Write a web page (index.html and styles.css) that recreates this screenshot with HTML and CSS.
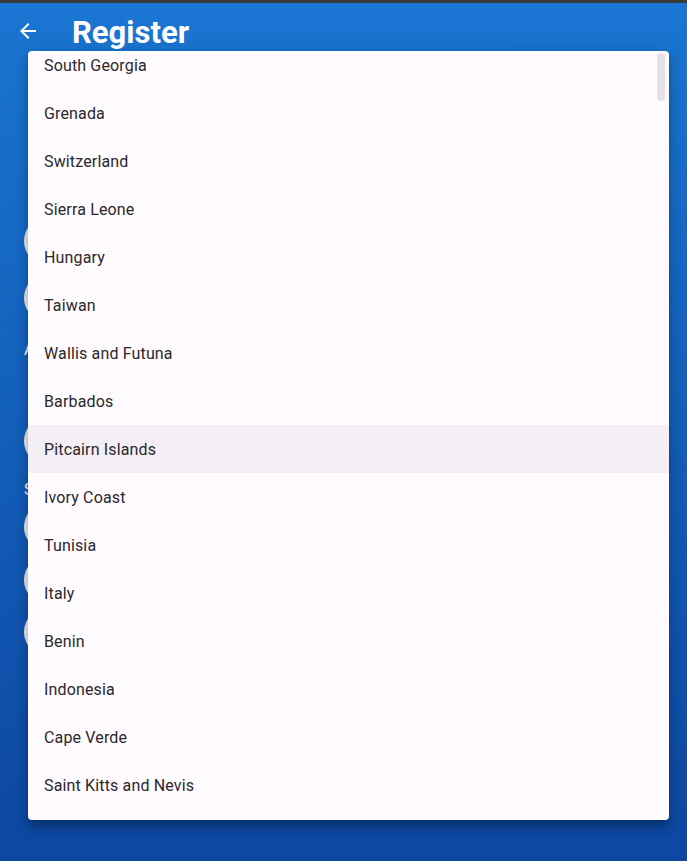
FILE: index.html
```html
<!DOCTYPE html>
<html>
<head>
<meta charset="utf-8">
<link rel="stylesheet" href="styles.css">
</head>
<body>
<div class="statusbar"></div>
<header class="appbar">
  <svg class="back" width="24" height="24" viewBox="0 0 24 24"><path d="M20 11H7.83l5.59-5.59L12 4l-8 8 8 8 1.41-1.41L7.83 13H20v-2z" fill="#fff"/></svg>
  <h1 class="title">Register</h1>
</header>
<main class="form">
  <div class="field f1"></div>
  <div class="field f2"></div>
  <div class="label la">Account</div>
  <div class="field f3"></div>
  <div class="label ls">Security</div>
  <div class="field f4"></div>
  <div class="field f5"></div>
  <div class="field f6"></div>
</main>
<div class="menu">
  <ul class="list">
    <li class="item">South Georgia</li>
    <li class="item">Grenada</li>
    <li class="item">Switzerland</li>
    <li class="item">Sierra Leone</li>
    <li class="item">Hungary</li>
    <li class="item">Taiwan</li>
    <li class="item">Wallis and Futuna</li>
    <li class="item">Barbados</li>
    <li class="item hover">Pitcairn Islands</li>
    <li class="item">Ivory Coast</li>
    <li class="item">Tunisia</li>
    <li class="item">Italy</li>
    <li class="item">Benin</li>
    <li class="item">Indonesia</li>
    <li class="item">Cape Verde</li>
    <li class="item">Saint Kitts and Nevis</li>
  </ul>
  <div class="scrollbar"></div>
</div>
</body>
</html>
```
FILE: styles.css
```css
html, body {
  margin: 0;
  padding: 0;
  height: 861px;
  overflow: hidden;
}
body {
  background: linear-gradient(180deg, #1976d2 0%, #0d47a1 100%);
  font-family: Roboto, "Noto Sans", sans-serif;
}
.statusbar {
  height: 3px;
  background: #3a3a3a;
}
.appbar {
  height: 56px;
  display: flex;
  align-items: center;
  padding-left: 16px;
}
.back {
  display: block;
}
.title {
  margin: 0 0 0 32px;
  color: #fff;
  font-size: 31px;
  font-weight: 700;
  letter-spacing: 0;
  line-height: 1;
  position: relative;
  top: 1px;
}
.form {
  padding-left: 24px;
  padding-top: 157px;
  display: flex;
  flex-direction: column;
}
.field {
  width: 300px;
  height: 50px;
  border-radius: 25px;
  background: #ebebeb;
}
.f2 { margin-top: 7px; }
.label {
  color: #fff;
  font-size: 16px;
  line-height: 20px;
}
.la { margin-top: 17px; }
.f3 { margin-top: 56px; }
.ls { margin-top: 14px; }
.f4 { margin-top: 2px; }
.f5 { margin-top: 3px; }
.f6 { margin-top: 2px; }
.menu {
  position: absolute;
  left: 28px;
  top: 51px;
  width: 641px;
  height: 769px;
  background: #fffbfe;
  border-radius: 4px;
  overflow: hidden;
  box-shadow: 0 5px 5px -3px rgba(0,0,0,0.2), 0 8px 10px 1px rgba(0,0,0,0.14), 0 3px 14px 2px rgba(0,0,0,0.12);
}
.list {
  list-style: none;
  margin: -10px 0 0 0;
  padding: 0;
}
.item {
  height: 48px;
  display: flex;
  align-items: center;
  padding-left: 16px;
  font-size: 16px;
  letter-spacing: 0.15px;
  color: #2a282e;
}
.item.hover {
  background: #f3eff4;
}
.scrollbar {
  position: absolute;
  right: 4px;
  top: 2px;
  width: 8px;
  height: 48px;
  border-radius: 4px;
  background: #e6e1e6;
}
```
